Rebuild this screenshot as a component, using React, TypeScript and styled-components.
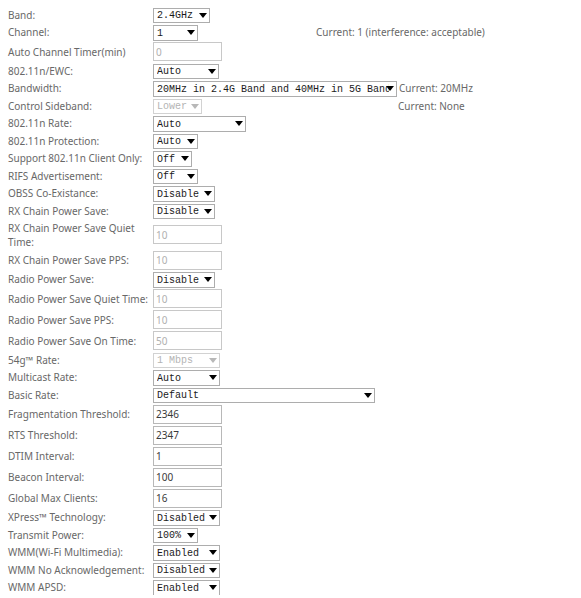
import React from 'react';
import styled, { createGlobalStyle } from 'styled-components';

const GlobalStyle = createGlobalStyle`
    html, body {
        margin: 0;
        background: #ffffff;
    }
`;

const Form = styled.div`
    display: grid;
    grid-template-columns: 145px auto;
    row-gap: 2px;
    align-items: center;
    justify-items: start;
    padding: 7px 0 0 8px;
    font-family: 'Noto Sans', 'Liberation Sans', sans-serif;
    font-size: 10px;
    color: #686868;
`;

const Label = styled.div`
    line-height: 14px;
    white-space: nowrap;
`;

const Cell = styled.div`
    display: flex;
    align-items: center;
    position: relative;
`;

const Note = styled.span<{ $gap: number }>`
    margin-left: ${(p) => p.$gap}px;
    line-height: 14px;
    white-space: nowrap;
`;

const SelectBox = styled.div<{ $w: number }>`
    position: relative;
    width: ${(p) => p.$w}px;
    height: 15.5px;
`;

const NativeSelect = styled.select`
    appearance: none;
    box-sizing: border-box;
    width: 100%;
    height: 100%;
    margin: 0;
    padding: 0 7px 0 3px;
    border: 1px solid #adadad;
    border-radius: 0;
    background: #ffffff;
    font-family: 'Liberation Mono', monospace;
    font-size: 10px;
    color: #1a1a1a;
    outline: none;

    &:disabled {
        color: #b4b4b4;
        border-color: #d2d2d2;
        opacity: 1;
    }
`;

const Caret = styled.svg<{ $disabled?: boolean }>`
    position: absolute;
    right: 3px;
    top: 50%;
    margin-top: -2px;
    pointer-events: none;
    fill: ${(p) => (p.$disabled ? '#b8b8b8' : '#000000')};
`;

const TextInput = styled.input`
    box-sizing: border-box;
    width: 69px;
    height: 19px;
    margin: 0;
    padding: 0 2px;
    border: 1px solid #b8b8b8;
    border-radius: 0;
    background: #ffffff;
    font-family: 'Noto Sans', 'Liberation Sans', sans-serif;
    font-size: 10px;
    color: #3a3a3a;
    outline: none;

    &:disabled {
        color: #b0b0b0;
        border-color: #c8c8c8;
    }
`;

type SelectRow = {
    kind: 'select';
    label: React.ReactNode;
    value: string;
    width: number;
    disabled?: boolean;
    note?: string;
    noteGap?: number;
};

type InputRow = {
    kind: 'input';
    label: React.ReactNode;
    value: string;
    disabled?: boolean;
};

const rows: (SelectRow | InputRow)[] = [
    { kind: 'select', label: 'Band:', value: '2.4GHz', width: 57 },
    {
        kind: 'select',
        label: 'Channel:',
        value: '1',
        width: 45,
        note: 'Current: 1 (interference: acceptable)',
        noteGap: 118,
    },
    { kind: 'input', label: 'Auto Channel Timer(min)', value: '0', disabled: true },
    { kind: 'select', label: '802.11n/EWC:', value: 'Auto', width: 66 },
    {
        kind: 'select',
        label: 'Bandwidth:',
        value: '20MHz in 2.4G Band and 40MHz in 5G Band',
        width: 244,
        note: 'Current: 20MHz',
        noteGap: 2,
    },
    {
        kind: 'select',
        label: 'Control Sideband:',
        value: 'Lower',
        width: 49,
        disabled: true,
        note: 'Current: None',
        noteGap: 196,
    },
    { kind: 'select', label: '802.11n Rate:', value: 'Auto', width: 93 },
    { kind: 'select', label: '802.11n Protection:', value: 'Auto', width: 45 },
    { kind: 'select', label: 'Support 802.11n Client Only:', value: 'Off', width: 39 },
    { kind: 'select', label: 'RIFS Advertisement:', value: 'Off', width: 45 },
    { kind: 'select', label: 'OBSS Co-Existance:', value: 'Disable', width: 62 },
    { kind: 'select', label: 'RX Chain Power Save:', value: 'Disable', width: 62 },
    {
        kind: 'input',
        label: (
            <>
                RX Chain Power Save Quiet
                <br />
                Time:
            </>
        ),
        value: '10',
        disabled: true,
    },
    { kind: 'input', label: 'RX Chain Power Save PPS:', value: '10', disabled: true },
    { kind: 'select', label: 'Radio Power Save:', value: 'Disable', width: 62 },
    { kind: 'input', label: 'Radio Power Save Quiet Time:', value: '10', disabled: true },
    { kind: 'input', label: 'Radio Power Save PPS:', value: '10', disabled: true },
    { kind: 'input', label: 'Radio Power Save On Time:', value: '50', disabled: true },
    { kind: 'select', label: '54g\u2122 Rate:', value: '1 Mbps', width: 67, disabled: true },
    { kind: 'select', label: 'Multicast Rate:', value: 'Auto', width: 67 },
    { kind: 'select', label: 'Basic Rate:', value: 'Default', width: 222 },
    { kind: 'input', label: 'Fragmentation Threshold:', value: '2346' },
    { kind: 'input', label: 'RTS Threshold:', value: '2347' },
    { kind: 'input', label: 'DTIM Interval:', value: '1' },
    { kind: 'input', label: 'Beacon Interval:', value: '100' },
    { kind: 'input', label: 'Global Max Clients:', value: '16' },
    { kind: 'select', label: 'XPress\u2122 Technology:', value: 'Disabled', width: 67 },
    { kind: 'select', label: 'Transmit Power:', value: '100%', width: 45 },
    { kind: 'select', label: 'WMM(Wi-Fi Multimedia):', value: 'Enabled', width: 67 },
    { kind: 'select', label: 'WMM No Acknowledgement:', value: 'Disabled', width: 67 },
    { kind: 'select', label: 'WMM APSD:', value: 'Enabled', width: 67 },
];

const Dropdown = ({ value, width, disabled }: { value: string; width: number; disabled?: boolean }) => (
    <SelectBox $w={width}>
        <NativeSelect value={value} disabled={disabled} onChange={() => undefined}>
            <option value={value}>{value}</option>
        </NativeSelect>
        <Caret $disabled={disabled} width="8" height="5" viewBox="0 0 8 5">
            <path d="M0 0h8L4 5z" />
        </Caret>
    </SelectBox>
);

const App = () => {
    return (
        <>
            <GlobalStyle />
            <Form>
                {rows.map((row, i) => (
                    <React.Fragment key={i}>
                        <Label>{row.label}</Label>
                        <Cell>
                            {row.kind === 'select' ? (
                                <>
                                    <Dropdown value={row.value} width={row.width} disabled={row.disabled} />
                                    {row.note && <Note $gap={row.noteGap ?? 2}>{row.note}</Note>}
                                </>
                            ) : (
                                <TextInput defaultValue={row.value} disabled={row.disabled} />
                            )}
                        </Cell>
                    </React.Fragment>
                ))}
            </Form>
        </>
    );
};

export default App;
